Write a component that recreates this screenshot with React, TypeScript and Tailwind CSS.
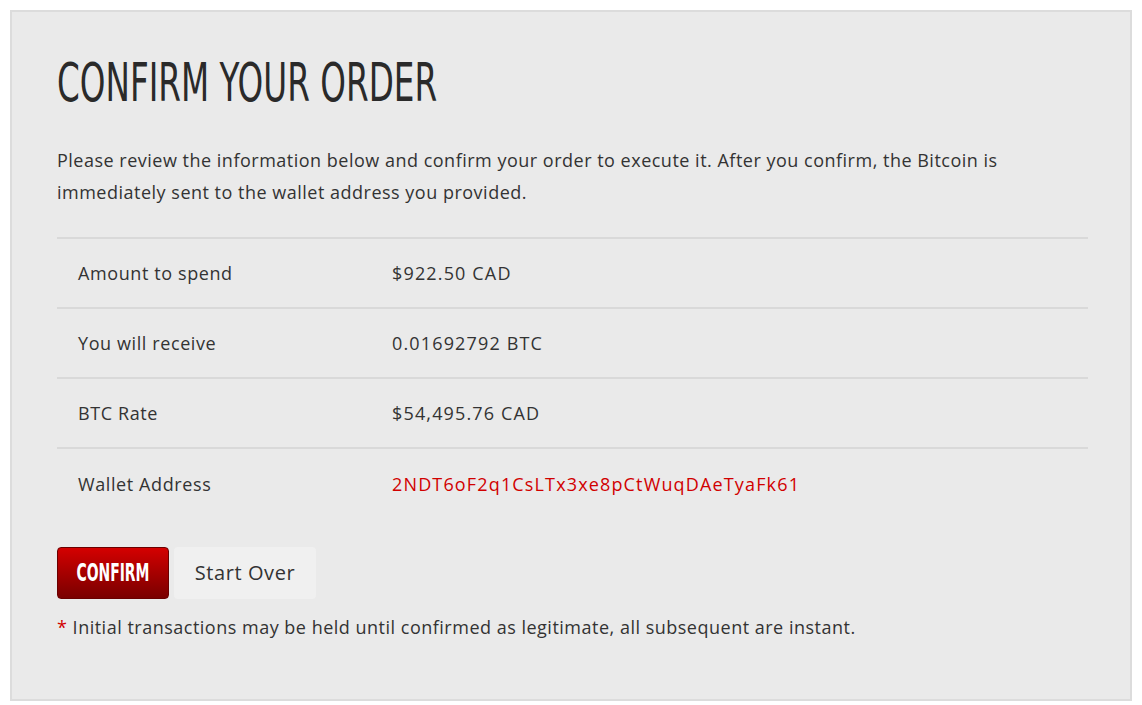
import React from "react";

const rows: { label: string; value: string; red?: boolean }[] = [
  { label: "Amount to spend", value: "$922.50 CAD" },
  { label: "You will receive", value: "0.01692792 BTC" },
  { label: "BTC Rate", value: "$54,495.76 CAD" },
  { label: "Wallet Address", value: "2NDT6oF2q1CsLTx3xe8pCtWuqDAeTyaFk61", red: true },
];

export default function App() {
  return (
    <div className="min-h-[705px] w-[1142px] bg-white p-[10px] font-['Open_Sans','Noto_Sans',sans-serif] text-[#333]">
      <div className="border-2 border-[#dcdcdc] bg-[#eaeaea] pl-[45px] pr-[42px] pt-[40px] pb-[56px]">
        <h1 className="origin-left scale-x-[0.685] whitespace-nowrap font-['DejaVu_Sans_Condensed','DejaVu_Sans',sans-serif] text-[53px] leading-[62px] text-[#2a2a2a]">
          CONFIRM YOUR ORDER
        </h1>
        <p className="mt-[30px] text-[18px] leading-[32px] tracking-[0.5px] text-[#333]">
          Please review the information below and confirm your order to execute it. After you confirm, the Bitcoin is
          immediately sent to the wallet address you provided.
        </p>
        <div className="mt-[29px] border-t-2 border-[#d9d9d9]">
          {rows.map((r, i) => (
            <div
              key={r.label}
              className={
                "flex h-[70px] items-center text-[18px] " +
                (i < rows.length - 1 ? "border-b-2 border-[#d9d9d9]" : "")
              }
            >
              <div className="w-[335px] pl-[21px] tracking-[0.6px]">{r.label}</div>
              <div className={"tracking-[1.15px] " + (r.red ? "text-[#d10000]" : "text-[#333]")}>{r.value}</div>
            </div>
          ))}
        </div>
        <div className="mt-[28px] flex gap-[5px]">
          <button className="flex h-[52px] w-[112px] items-center justify-center rounded-[4px] border border-[#6a0000] bg-gradient-to-b from-[#d40000] to-[#7a0000] text-white">
            <span className="inline-block scale-x-[0.62] font-['DejaVu_Sans_Condensed','DejaVu_Sans',sans-serif] text-[25px] font-bold">
              CONFIRM
            </span>
          </button>
          <button className="flex h-[52px] w-[142px] items-center justify-center rounded-[4px] bg-[#f0f0f0] text-[20px] tracking-[0.6px] text-[#333]">
            Start Over
          </button>
        </div>
        <p className="mt-[12px] text-[18px] leading-[32px] tracking-[0.5px]">
          <span className="text-[#d10000]">*</span> Initial transactions may be held until confirmed as legitimate, all subsequent are instant.
        </p>
      </div>
    </div>
  );
}
